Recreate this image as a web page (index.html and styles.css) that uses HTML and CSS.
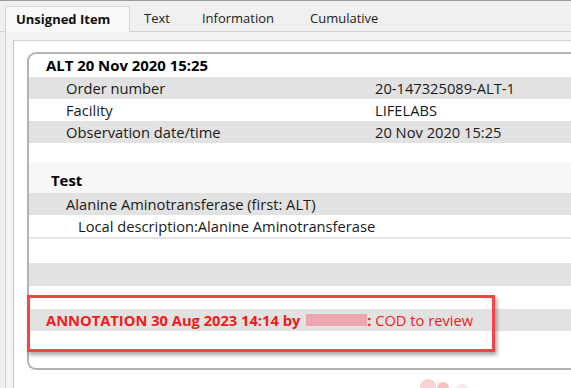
FILE: index.html
```html
<!DOCTYPE html>
<html>
<head>
<meta charset="utf-8">
<link rel="stylesheet" href="styles.css">
</head>
<body>
<div class="window">
  <div class="tabs">
    <div class="tab active">Unsigned Item</div>
    <div class="tab t-text">Text</div>
    <div class="tab t-info">Information</div>
    <div class="tab t-cum">Cumulative</div>
  </div>
  <div class="pane">
    <div class="inner">
      <div class="box">
        <div class="row head">ALT 20 Nov 2020 15:25</div>
        <div class="row kv gray"><span class="k">Order number</span><span class="v">20-147325089-ALT-1</span></div>
        <div class="row kv"><span class="k">Facility</span><span class="v">LIFELABS</span></div>
        <div class="row kv gray"><span class="k">Observation date/time</span><span class="v">20 Nov 2020 15:25</span></div>
        <div class="row blank1"></div>
        <div class="row test">Test</div>
        <div class="row kv gray"><span class="k">Alanine Aminotransferase (first: ALT)</span></div>
        <div class="row local">Local description:Alanine Aminotransferase</div>
        <div class="row blank2"></div>
        <div class="row gray blank3"></div>
        <div class="row blank4"></div>
        <div class="row gray annot"><b>ANNOTATION 30 Aug 2023 14:14 by </b><span class="redact"></span><b>:</b>&nbsp;COD to review</div>
        <div class="row rest"></div>
      </div>
    </div>
  </div>
  <div class="highlight"></div>
  <svg class="mark" width="70" height="20" viewBox="0 0 70 20">
    <circle cx="18" cy="18" r="8" fill="#f8d2d2"/>
    <circle cx="33" cy="19" r="6" fill="#f5c0c0"/>
    <circle cx="52" cy="21" r="6" fill="#fce8e8"/>
  </svg>
</div>
</body>
</html>
```

FILE: styles.css
```css
html, body {
  margin: 0;
  padding: 0;
}
body {
  background: #f0f0f0;
  font-family: "Open Sans", "Noto Sans", sans-serif;
  font-size: 14.7px;
  color: #1a1a1a;
  overflow: hidden;
  width: 571px;
  height: 388px;
}
.window {
  position: relative;
  height: 387px;
  border-top: 1px solid #9c9c9c;
  overflow: hidden;
}
.tabs {
  display: flex;
  height: 31px;
  padding-left: 5px;
  box-sizing: border-box;
  align-items: flex-end;
  border-bottom: 1px solid #d3d3d3;
}
.tab {
  height: 25px;
  line-height: 24px;
  box-sizing: border-box;
  font-size: 13px;
  color: #222;
}
.tab.active {
  width: 125px;
  background: #f9f9f9;
  border: 1px solid #d6d6d6;
  border-bottom: none;
  font-weight: 700;
  padding-left: 10px;
  margin-bottom: -1px;
  height: 26px;
  color: #111;
}
.t-text { padding: 0 16px 0 14px; }
.t-info { padding: 0 18px 0 16px; }
.t-cum { padding: 0 0 0 18px; }
.pane {
  margin-left: 5px;
  border-left: 1px solid #d3d3d3;
  background: #f3f3f3;
  padding-top: 8px;
  height: 356px;
  box-sizing: border-box;
}
.inner {
  margin-left: 7px;
  background: #fff;
  border-top: 1px solid #d0d0d0;
  border-left: 1px solid #c4c4c4;
  padding: 11px 0 0 13px;
  height: 348px;
  box-sizing: border-box;
}
.box {
  width: 544px;
  height: 318px;
  box-sizing: border-box;
  border: 2px solid #b3b3b3;
  border-right: none;
  border-radius: 9px 0 0 9px;
  display: flex;
  flex-direction: column;
  overflow: hidden;
}
.row {
  flex: none;
  height: 22px;
  line-height: 22px;
  box-sizing: border-box;
  white-space: nowrap;
}
.gray { background: #e2e2e2; }
.head {
  height: 23px;
  font-weight: 700;
  padding-left: 17px;
  font-size: 14.9px;
  color: #000;
}
.kv {
  display: flex;
  padding-left: 37px;
}
.k { width: 309px; flex: none; }
.blank1 { height: 20px; }
.test {
  height: 30px;
  background: #f7f7f7;
  font-weight: 700;
  padding-left: 22px;
  padding-top: 6px;
  line-height: 22px;
  font-size: 14.9px;
  color: #000;
}
.local {
  height: 24px;
  padding-left: 49px;
  border-bottom: 2px solid #e4e4e4;
}
.blank2 { height: 24px; }
.blank3 { height: 23px; }
.blank4 { height: 23px; }
.annot {
  color: #f51a1a;
  padding-left: 17px;
  display: flex;
  align-items: center;
}
.annot b { font-weight: 700; white-space: pre; }
.redact {
  display: inline-block;
  width: 61px;
  height: 12px;
  background: #eca6ad;
  margin: 0 0 0 2px;
}
.rest { flex: 1; }
.highlight {
  position: absolute;
  left: 27px;
  top: 294px;
  width: 468px;
  height: 57px;
  box-sizing: border-box;
  border: 3px solid #f24646;
  box-shadow: 2px 3px 4px rgba(0,0,0,0.35);
}
.mark {
  position: absolute;
  left: 410px;
  top: 368px;
}
```
